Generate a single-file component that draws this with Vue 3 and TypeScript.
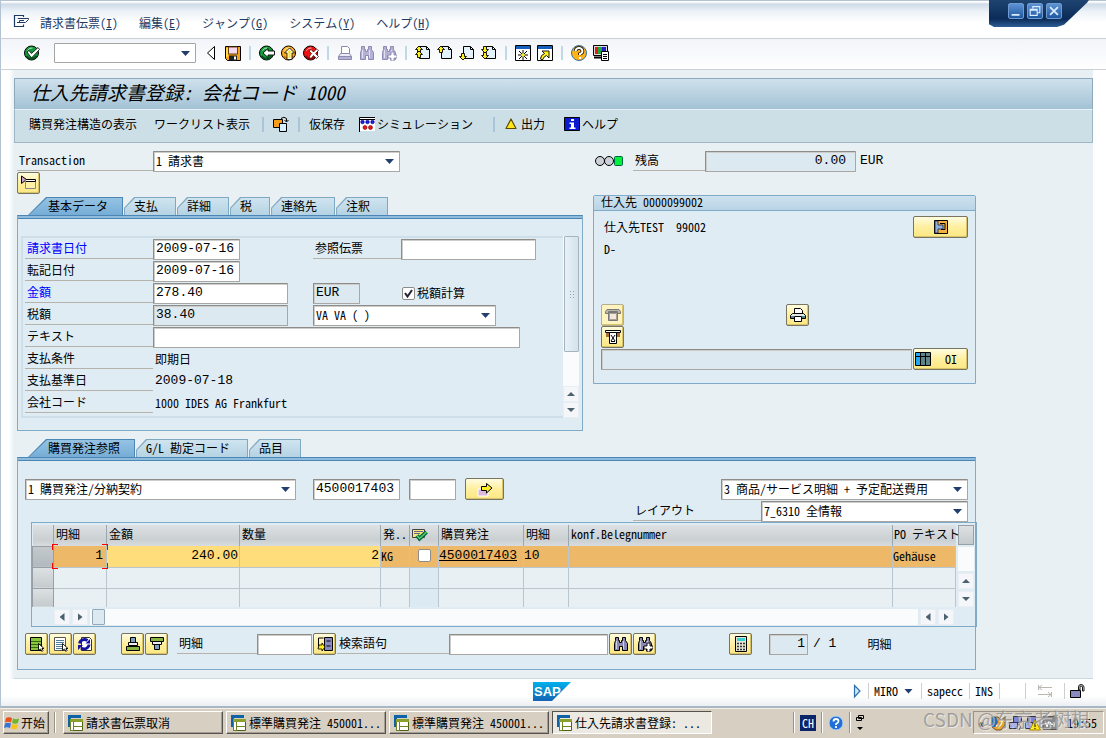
<script setup lang="ts">
import { h, reactive } from 'vue'

const page =
  '<path d="M4.500 1.500h7l3 3v9h-10z" fill="#e4f3fb" stroke="#000"/><path d="M11.500 1.500v3h3" fill="none" stroke="#000"/>'
const up = (x: number, y: number) =>
  `<path d="M${x} ${y}l3.500 3.500h-2v3h-3v-3h-2z" fill="#ffee20" stroke="#000" stroke-width=".9"/>`
const down = (x: number, y: number) =>
  `<path d="M${x} ${y}l3.500-3.500h-2v-3h-3v3h-2z" fill="#ffee20" stroke="#000" stroke-width=".9"/>`
const glasses = (line: string, fill: string) =>
  `<path d="M2.500 1.500h3v3h1v2h2v-2h1v-3h3v3l2 3v7h-5v-4h-3v4h-5v-7l1-3z" fill="${fill}" stroke="${line}"/><path d="M3.500 5v8M10.500 5v8" stroke="#fff" opacity=".6"/>`
const plus = (line: string) =>
  `<path d="M10 7h3v3h3v3h-3v3h-3v-3h-3v-3h3z" fill="#fff" stroke="${line}" stroke-width=".9"/>`
const ball = (fill: string, shade: string) =>
  `<circle cx="7.500" cy="8" r="7" fill="${fill}" stroke="#000"/><path d="M2.500 11a6 6 0 0 0 10 0" stroke="${shade}" stroke-width="2" fill="none"/><path d="M3.500 5.500q2-3 5-2.500" stroke="#fff" opacity=".7" fill="none"/>`

const icons: Record<string, string> = {
  menu: '<path d="M10.500 4v-1.500h-9v11h9v-2" fill="none" stroke="#1e3b63" stroke-width="1.200"/><path d="M5 6V5.500h10.500v1l-3 3h-6V7.500H11M4 9.500h4" fill="none" stroke="#1e3b63"/>',
  ok: ball('#129a3a', '#06521f') + '<path d="M3 7l2-1.500 2.500 3L14 2.500l1.500 2-8 8.500z" fill="#fff" stroke="#000" stroke-width=".8"/>',
  prev: '<path d="M11.500 1.500v13L4.500 8z" fill="#fff" stroke="#000"/>',
  save: '<path d="M.5 1.500h15v14h-13l-2-2z" fill="#f6a414" stroke="#000"/><path d="M3.500 2h9v7h-9z" fill="#f3d9ee" stroke="#6b3c10"/><path d="M4 10.500h8v5H4z" fill="#222"/><path d="M9 11.500h2v3H9z" fill="#fff"/><path d="M2 3v9" stroke="#ffee55" stroke-width="1.500"/>',
  back: ball('#129a3a', '#06521f') + '<path d="M4 8l5-4.500V6h6.500v4H9v2.500z" fill="#fff" stroke="#000" stroke-width=".9"/>',
  exit: ball('#ffb01c', '#c87200') + '<path d="M8.500 3l5 5H11v6.500H6V8H3.500z" fill="#fff" stroke="#000" stroke-width=".8"/><path d="M8.500 5l2.500 2.500H9.500V13h-2V7.500H6z" fill="#ffe21c"/>',
  cancel: ball('#ee1313', '#8c0606') + '<path d="M6 6l2.500 2.500L6 12l2 1.500 2.500-3 3 3 2-2-3-3 3-3-2-1.500-3 3L8 4.500z" fill="#fff" stroke="#400" stroke-width=".7"/>',
  print: '<path d="M4.500 9V1.500h6l2 2V9" fill="#fff" stroke="#8d89b0"/><path d="M3.500 8.500h9l2 3h-13z" fill="#eceaf5" stroke="#8d89b0"/><path d="M1.500 11.500h13v3h-13z" fill="#b4b1d4" stroke="#8d89b0"/>',
  find: glasses('#8d89b0', '#b4b1d4'),
  findNext: glasses('#8d89b0', '#b4b1d4') + plus('#8d89b0'),
  first: page + up(4, 1) + up(4, 6),
  pageUp: page + up(4, 1),
  pageDown: page + down(4, 15),
  last: page + down(4, 8) + down(4, 14),
  session: '<path d="M.5.500h15v15H.5z" fill="#fff" stroke="#000"/><path d="M1 1h14v3H1z" fill="#1560bd"/><path d="M8 5v10M3 10h10M4 6l8 8M12 6l-8 8" stroke="#000"/><circle cx="8" cy="10" r="1.800" fill="#ffee20"/>',
  shortcut: '<path d="M.5.500h15v15H.5z" fill="#fff" stroke="#000"/><path d="M1 1h14v3H1z" fill="#1560bd"/><path d="M5 6h7v7l-2.500-2.500q-3 1-4 4.500l-2-1q0-4 4-5.500z" fill="#ffee20" stroke="#000" stroke-width=".9"/>',
  help: '<circle cx="8" cy="8" r="7.500" fill="#ffb31a" stroke="#3b6ea0"/><path d="M4.500 6q.5-3 3.500-3t3.500 3q0 2-2.500 3v1" fill="none" stroke="#000" stroke-width="3.500"/><path d="M4.500 6q.5-3 3.500-3t3.500 3q0 2-2.500 3v1M9 12v2" fill="none" stroke="#fff" stroke-width="2"/>',
  layout: '<path d="M.5.500h14v10H.5z" fill="#ddd" stroke="#000"/><path d="M2 2h3v7H2z" fill="#e21b1b"/><path d="M5 2h4v7H5z" fill="#1ca83c"/><path d="M9 2h4v7H9z" fill="#2222cc"/><path d="M1 12.500h7" stroke="#000" stroke-width="2"/><path d="M8.500 6.500h7v9h-7z" fill="#fff" stroke="#000"/><path d="M10 9.500h4M10 11.500h4M10 13.500h4" stroke="#000"/>',
  other: '<path d="M.5 3.500h9v8h-9z" fill="#f59c1a" stroke="#000"/><path d="M6.500 7.500h7v8h-7z" fill="#d6efff" stroke="#000"/><path d="M8 2.500q3-2.500 5.500 0v3M11.500 4l2 2 2-2" fill="none" stroke="#000"/>',
  simulate: '<path d="M1 1h15v14H1z" fill="#fff"/><path d="M.5 16V1.500H16M1 3.500h15" fill="none" stroke="#000"/><g fill="#1b1be0" stroke="#000080" stroke-width=".6"><circle cx="3.500" cy="6" r="1.800"/><circle cx="8.500" cy="6" r="1.800"/><circle cx="13.500" cy="6" r="1.800"/></g><g fill="#ee1313" stroke="#700" stroke-width=".6"><circle cx="6" cy="11.500" r="2"/><circle cx="11.500" cy="11.500" r="2"/></g>',
  warn: '<path d="M8 3l5 9.500H3z" fill="#ffe61a" stroke="#5c4a00" stroke-width="1.200" stroke-linejoin="round"/>',
  info: '<path d="M.5 1.500h15v13H.5z" fill="#0b1bd0" stroke="#000"/><path d="M7 3h3v2H7zM5.500 6.500H10V11.500h1.500v1.500H5.500v-1.500H7V8H5.500z" fill="#fff"/>',
  header: '<path d="M.5 1l5 3.500-5 4z" fill="#c9a6d0" stroke="#000"/><path d="M4.500 5.500h10v8h-10z" fill="#fff0a8" stroke="#888"/><path d="M5 4.500h9.500v2H5" fill="#fff" stroke="#000"/>',
  vendor: '<path d="M1.500 1.500h13v13h-13z" fill="#f5b13c" stroke="#000"/><path d="M2 2h3v4h5v4H5v4H2z" fill="#8fb1e0" stroke="#223" stroke-width=".8"/><path d="M7 4.500h5v6H8" fill="none" stroke="#000"/>',
  phone: '<path d="M2 2.500h12l1.500 2v2h-3v-2h-9v2h-3v-2z" fill="#bdb9a6" stroke="#777"/><path d="M3.500 5.500h9v8h-9z" fill="#a7a390" stroke="#777"/><path d="M5 7h6v5H5z" fill="#f5e6de"/>',
  letter: '<path d="M1 4h3v4H1zM12 4h3v4h-3z" fill="#a86c36"/><path d="M.5 1.500h15v2H.5z" fill="#fff" stroke="#000"/><path d="M4.500 3.500h7v11h-7z" fill="#fff" stroke="#000"/><path d="M6 6l4 6M10 6l-4 6M6 12.500h4" stroke="#000"/>',
  printer: '<path d="M4.500 7V1.500h6l2 2V7" fill="#fff" stroke="#000"/><path d="M2.500 6.500h11l2 2v3h-15v-3z" fill="#dfe8ea" stroke="#000"/><path d="M4.500 9.500h7v5h-7z" fill="#fff" stroke="#000"/><path d="M1 9h3v2H1zM12 9h3v2h-3z" fill="#588"/>',
  grid: '<path d="M.5 1.500h15v13H.5z" fill="#5d8588" stroke="#000"/><path d="M1 2h4v12H1z" fill="#20a8f5"/><path d="M5.500 2v12M10.500 2v12M1 5.500h14" stroke="#000"/>',
  go: '<path d="M1 8h10v7H1z" fill="#dcb8da" stroke="#fff"/><path d="M4.500 5.500h5v-3L15 7l-5.500 5V9.500h-5z" fill="#ffee20" stroke="#000"/>',
  approve: '<path d="M.5 3.500h12v8H.5z" fill="#fbe67b" stroke="#444"/><path d="M2 5.500h9M2 7.500h6" stroke="#668"/><path d="M5 9.500l2.500 3L14.500 6" fill="none" stroke="#064" stroke-width="4"/><path d="M5 9.500l2.500 3L14.500 6" fill="none" stroke="#58d060" stroke-width="1.500"/>',
  selectAll: '<path d="M1.500 1.500h11v13h-11z" fill="#8bc53f" stroke="#000"/><path d="M2 5.500h10M2 8.500h10M2 11.500h10" stroke="#2d6a10"/><path d="M9.500 7.500v7l2-1.500 1.500 2.500 1-1-1-2h2z" fill="#fff" stroke="#000" stroke-width=".9"/>',
  deselect: '<path d="M1.500 1.500h11v13h-11z" fill="#fff" stroke="#555"/><path d="M3 4.500h8M3 6.500h8M3 8.500h8M3 10.500h6M3 12.500h6" stroke="#4d7d9d"/><path d="M9.500 7.500v7l2-1.500 1.500 2.500 1-1-1-2h2z" fill="#fff" stroke="#000" stroke-width=".9"/>',
  refresh: '<path d="M4.500 1.500h8l2 2v11h-10z" fill="#fff" stroke="#333"/><path d="M2.500 7.500a5 4.500 0 0 1 8-3M12 8.500a5 4.500 0 0 1-8 3.500" fill="none" stroke="#1414a0" stroke-width="2.800"/><path d="M8.500 7.500H13V3zM6 9H1v5z" fill="#1414a0"/>',
  insertRow: '<path d="M5.500 1.500h5v5h-5z" fill="#7ba0c4" stroke="#000"/><path d="M3.500 6.500h9v3h-9z" fill="#eee" stroke="#000"/><path d="M1.500 10.500h13v4h-13z" fill="#8bb53f" stroke="#000"/>',
  deleteRow: '<path d="M1.500 1.500h13v4h-13z" fill="#8bb53f" stroke="#000"/><path d="M3.500 5.500h9v3h-9z" fill="#eee" stroke="#000"/><path d="M5.500 8.500h5v5h-5z" fill="#7ba0c4" stroke="#000"/>',
  position: '<path d="M7.500 1.500h8v13h-8z" fill="#8a8ac0" stroke="#000"/><path d="M9.500 5h4M9.500 10h4M6.500 2h-5v11" stroke="#000" fill="none"/><path d="M2 9l3 0 0-2 3 4-3 4V13H1z" fill="#ffee20" stroke="#000" stroke-width=".8"/>',
  search: glasses('#000', '#8a8ab4'),
  searchNext: glasses('#000', '#8a8ab4') + plus('#000'),
  calc: '<path d="M2.500.500h11v15h-11z" fill="#e8e4d4" stroke="#000"/><path d="M4 2h8v3H4z" fill="#39d0d0"/><path d="M4 7.500h8M4 10.500h8M4 13.500h8" stroke="#333" stroke-width="1.500" stroke-dasharray="2 1"/>',
  swap: '<path d="M2 4.500h13M5 2L2 4.500 5 7M1 11.500h13M11 9l3 2.500-3 2.500M1.500 2v5M14.500 9v5" fill="none" stroke="#bbb6ae"/>',
  lock: '<path d="M.5 7.500h10v7H.5z" fill="#8a8ac0" stroke="#000"/><path d="M8.500 7V4q0-2.500 2.500-2.500T14 4v4h-1.500V4q0-1-1.500-1t-1 1v3z" fill="#fff" stroke="#000" stroke-width=".9"/>',
  play: '<path d="M5.500 2.500L11 8l-5.500 6z" fill="#cfe6f5" stroke="#2a6fae" stroke-width="1.200"/>',
  sap: '<path d="M1 0h13v3H4v9H1z" fill="#0d62a8"/><path d="M3.500 4.500h12v11h-12z" fill="#fff" stroke="#4f6212"/><path d="M3 4h13v3H3z" fill="#8aa02c"/><path d="M3.500 7v8.500h3V7M6.500 11.500h9" fill="none" stroke="#6d8420"/>',
  win: '<path d="M2 3q3-1.500 6 0l-1 4.500q-3-1.500-6 0z" fill="#e8501c"/><path d="M9 3.500q3 1.500 6 0L14 8q-3 1.500-6 0z" fill="#6cb52d"/><path d="M1 8.500q3-1.500 6 0L6 13q-3-1.500-6 0z" fill="#3a74d8"/><path d="M8 9q3 1.500 6 0l-1 4.500q-3 1.500-6 0z" fill="#f7c21a"/>',
  helpBlue: '<circle cx="8" cy="8" r="7" fill="#1f6fd6" stroke="#b9d4f4"/><path d="M5.500 6.500q0-2.500 2.500-2.500t2.500 2.200Q10.500 7.500 8 9v1M8 11v2" fill="none" stroke="#fff" stroke-width="1.800"/>',
  restore: '<path d="M6.500.500h5v3h-5zM4.500 2.500h5v3h-5z" fill="#d6cfc3" stroke="#000"/><path d="M5 12h6l-3 3z" fill="#000"/>',
  swirl: '<path d="M1 2h6l3 3 4-3v8l-4 5H5l-4-3z" fill="#f0a01c" stroke="#6b5a30"/><path d="M1 2h4l2 5-3 5H1z" fill="#2368b8"/><path d="M5 11q6 0 6-7" stroke="#fff3a0" stroke-width="2" fill="none"/>',
  net: '<path d="M5.500 1.500h8v6h-8z" fill="#7b84d8" stroke="#334"/><path d="M1.500 7.500h8v6h-8z" fill="#aab2f0" stroke="#334"/><path d="M11 9q3 3 0 6" stroke="#556" fill="none"/>',
  netWarn: '<path d="M2.500 1.500h8v6h-8z" fill="#7b84d8" stroke="#334"/><path d="M.5 7.500h7v6h-7z" fill="#aab2f0" stroke="#334"/><path d="M10 5l5.500 10h-11z" fill="#ffe61a" stroke="#a80"/><path d="M10 8v4M10 13v1" stroke="#000"/>',
  vm: '<path d="M1 1.500h14v13H1z" fill="#888" stroke="#555"/><path d="M3 6l2 6 2-6M8 12V7l2 3 2-3v5" fill="none" stroke="#fff"/>',
}

const Icon = (props: { name: string }) =>
  h('svg', { class: 'icon', viewBox: '0 0 16 16', width: 16, height: 16, 'aria-hidden': 'true', innerHTML: icons[props.name] })
Icon.props = ['name']

const menus = [
  { text: '請求書伝票', key: 'I' },
  { text: '編集', key: 'E' },
  { text: 'ジャンプ', key: 'G' },
  { text: 'システム', key: 'Y' },
  { text: 'ヘルプ', key: 'H' },
]
const toolGroups = [
  ['back', 'exit', 'cancel'],
  ['print', 'find', 'findNext'],
  ['first', 'pageUp', 'pageDown', 'last'],
  ['session', 'shortcut'],
  ['help', 'layout'],
]
const headerTabs = ['基本データ', '支払', '詳細', '税', '連絡先', '注釈']
const itemTabs = ['購買発注参照', 'G/L 勘定コード', '品目']
const tasks = ['請求書伝票取消', '標準購買発注 450001...', '標準購買発注 450001...', '仕入先請求書登録: ...']
const tray = ['swirl', 'net', 'netWarn', 'vm']

const form = reactive({
  command: '',
  balance: '0.00',
  invoiceDate: '2009-07-16',
  postingDate: '2009-07-16',
  reference: '',
  amount: '278.40',
  currency: 'EUR',
  calcTax: true,
  taxAmount: '38.40',
  text: '',
  account: '',
  poNumber: '4500017403',
  poItem: '',
  finalInvoice: false,
  position: '',
  searchTerm: '',
  current: '1',
})
</script>

<template>
  <div class="window">
    <div class="winctl">
      <button type="button" aria-label="最小化"><svg viewBox="0 0 16 16"><path d="M3 12.500h9" stroke="#dcecff" stroke-width="2" /></svg></button>
      <button type="button" aria-label="元に戻す"><svg viewBox="0 0 16 16"><path d="M5.500 5V3h8v7h-3M2.500 6h8v7h-8zM2.500 7h8" fill="none" stroke="#dcecff" stroke-width="1.300" /></svg></button>
      <button type="button" aria-label="閉じる"><svg viewBox="0 0 16 16"><path d="M3.500 3.500l9 9M12.500 3.500l-9 9" stroke="#dcecff" stroke-width="2" /></svg></button>
    </div>

    <nav class="menubar">
      <Icon name="menu" />
      <button v-for="m in menus" :key="m.key" type="button">{{ m.text }}(<u>{{ m.key }}</u>)</button>
    </nav>

    <div class="toolbar">
      <button type="button" class="tool" aria-label="確定"><Icon name="ok" /></button>
      <input v-model="form.command" class="command arrow" aria-label="コマンド" />
      <button type="button" class="tool" aria-label="前"><Icon name="prev" /></button>
      <button type="button" class="tool" aria-label="保存"><Icon name="save" /></button>
      <div v-for="(g, i) in toolGroups" :key="i" class="toolgroup">
        <button v-for="n in g" :key="n" type="button" class="tool" :aria-label="n"><Icon :name="n" /></button>
      </div>
    </div>

    <main class="screen">
      <h1>仕入先請求書登録: 会社コード 1000</h1>
      <div class="appbar">
        <button type="button" class="structure">購買発注構造の表示</button>
        <button type="button">ワークリスト表示</button>
        <i class="sep near"></i>
        <button type="button" aria-label="他の伝票"><Icon name="other" /></button>
        <i class="sep"></i>
        <button type="button">仮保存</button>
        <button type="button"><Icon name="simulate" />シミュレーション</button>
        <i class="sep wide"></i>
        <button type="button"><Icon name="warn" />出力</button>
        <button type="button" class="helpbtn"><Icon name="info" />ヘルプ</button>
      </div>

      <div class="body">
        <div class="upper">
          <section class="left">
            <div class="row">
              <label for="transaction" class="lbl w-trans">Transaction</label>
              <select id="transaction" class="field arrow w-trans-sel"><option>1 請求書</option></select>
            </div>
            <div class="row">
              <button type="button" class="btn" aria-label="ヘッダ"><Icon name="header" /></button>
            </div>
            <div class="tabs">
              <button v-for="(t, i) in headerTabs" :key="t" type="button" class="tab" :class="{ active: i === 0 }"><span>{{ t }}</span></button>
            </div>
            <div class="panel basic">
              <div class="formgrid">
                <label for="bldat" class="lbl req">請求書日付</label>
                <input id="bldat" v-model="form.invoiceDate" class="field w-date" />
                <label for="xblnr" class="lbl">参照伝票</label>
                <input id="xblnr" v-model="form.reference" class="field w-amount" />

                <label for="budat" class="lbl first">転記日付</label>
                <input id="budat" v-model="form.postingDate" class="field w-date" />

                <label for="wrbtr" class="lbl req first">金額</label>
                <input id="wrbtr" v-model="form.amount" class="field w-amount" />
                <input v-model="form.currency" class="field ro w-cur" readonly aria-label="通貨" />
                <label class="check"><input v-model="form.calcTax" type="checkbox" />税額計算</label>

                <label for="wmwst" class="lbl first">税額</label>
                <input id="wmwst" v-model="form.taxAmount" class="field ro w-amount" readonly />
                <select class="field arrow w-tax" aria-label="税コード"><option>VA VA ( )</option></select>

                <label for="sgtxt" class="lbl first">テキスト</label>
                <input id="sgtxt" v-model="form.text" class="field w-text" />

                <span class="lbl first">支払条件</span>
                <output class="val">即期日</output>
                <span class="lbl first">支払基準日</span>
                <output class="val num">2009-07-18</output>
                <span class="lbl first">会社コード</span>
                <output class="val">1000 IDES AG Frankfurt</output>
              </div>
              <div class="vscroll">
                <div class="thumb"><i></i></div>
                <button type="button" class="sb up" aria-label="上へ"></button>
                <button type="button" class="sb down" aria-label="下へ"></button>
              </div>
            </div>
          </section>

          <section class="right">
            <div class="row balance">
              <svg class="lights" viewBox="0 0 28 12"><circle cx="5" cy="6" r="4.500" fill="#ccd0d8" stroke="#000" /><circle cx="14" cy="6" r="4.500" fill="#ccd0d8" stroke="#000" /><rect x="19.500" y="1.500" width="8" height="9" rx="1" fill="#00f03c" stroke="#064" /></svg>
              <label for="balance" class="lbl w-bal">残高</label>
              <input id="balance" v-model="form.balance" class="field ro w-balance" readonly />
              <span class="num cur">EUR</span>
            </div>
            <div class="group">
              <h2>仕入先 0000099002</h2>
              <div class="vendor">
                <div class="row"><span class="txt">仕入先TEST&nbsp; 99002</span><button type="button" class="btn big" aria-label="仕入先"><Icon name="vendor" /></button></div>
                <div class="row"><span class="txt">D-</span></div>
                <div class="row actions">
                  <button type="button" class="btn" disabled aria-label="電話"><Icon name="phone" /></button>
                  <button type="button" class="btn" aria-label="印刷"><Icon name="printer" /></button>
                </div>
                <div class="row"><button type="button" class="btn" aria-label="書類"><Icon name="letter" /></button></div>
                <div class="row">
                  <input v-model="form.account" class="field ro grow" readonly aria-label="口座" />
                  <button type="button" class="btn big oi"><Icon name="grid" />OI</button>
                </div>
              </div>
            </div>
          </section>
        </div>

        <section class="lower">
          <div class="tabs">
            <button v-for="(t, i) in itemTabs" :key="t" type="button" class="tab" :class="{ active: i === 0 }"><span>{{ t }}</span></button>
          </div>
          <div class="panel items">
            <div class="row inset">
              <select class="field arrow w-ref" aria-label="参照区分"><option>1 購買発注/分納契約</option></select>
              <input v-model="form.poNumber" class="field w-date po" aria-label="購買発注番号" />
              <input v-model="form.poItem" class="field w-item" aria-label="購買発注明細" />
              <button type="button" class="btn go" aria-label="実行"><Icon name="go" /></button>
              <select class="field arrow w-kind push" aria-label="明細区分"><option>3 商品/サービス明細 + 予定配送費用</option></select>
            </div>
            <div class="row inset">
              <label for="layout" class="lbl push w-layout">レイアウト</label>
              <select id="layout" class="field arrow w-layout-sel"><option>7_6310 全情報</option></select>
            </div>

            <div class="tablebox">
              <div class="tablerow">
                <table>
                  <colgroup>
                    <col class="c0" /><col class="c1" /><col class="c2" /><col class="c3" /><col class="c4" />
                    <col class="c4" /><col class="c6" /><col class="c7" /><col /><col class="c9" />
                  </colgroup>
                  <thead>
                    <tr>
                      <th></th><th>明細</th><th>金額</th><th>数量</th><th>発..</th>
                      <th><Icon name="approve" /></th><th>購買発注</th><th>明細</th><th>konf.Belegnummer</th><th>PO テキスト</th>
                    </tr>
                  </thead>
                  <tbody>
                    <tr class="sel">
                      <td class="handle"></td>
                      <td class="num r cursor">1</td>
                      <td class="num r edit">240.00</td>
                      <td class="num r edit">2</td>
                      <td>KG</td>
                      <td class="c"><input v-model="form.finalInvoice" type="checkbox" aria-label="最終請求" /></td>
                      <td class="num"><a href="#">4500017403</a></td>
                      <td class="num">10</td>
                      <td></td>
                      <td>Gehäuse</td>
                    </tr>
                    <tr v-for="r in 2" :key="r"><td class="handle"></td><td v-for="c in 9" :key="c" :class="{ tint: c === 5 }"></td></tr>
                  </tbody>
                </table>
                <div class="tscroll">
                  <button type="button" class="config" aria-label="テーブル設定"></button>
                  <i class="track"></i>
                  <button type="button" class="sb up" aria-label="上へ"></button>
                  <button type="button" class="sb down" aria-label="下へ"></button>
                </div>
              </div>
              <div class="hscroll">
                <button type="button" class="sb lt" aria-label="左へ"></button>
                <button type="button" class="sb rt" aria-label="右へ"></button>
                <div class="track"><i></i></div>
                <button type="button" class="sb lt" aria-label="左へ"></button>
                <button type="button" class="sb rt" aria-label="右へ"></button>
              </div>
            </div>

            <div class="row inset itembar">
              <div class="btns">
                <button type="button" class="btn" aria-label="全選択"><Icon name="selectAll" /></button>
                <button type="button" class="btn" aria-label="全選択解除"><Icon name="deselect" /></button>
                <button type="button" class="btn" aria-label="更新"><Icon name="refresh" /></button>
              </div>
              <div class="btns rows">
                <button type="button" class="btn" aria-label="行挿入"><Icon name="insertRow" /></button>
                <button type="button" class="btn" aria-label="行削除"><Icon name="deleteRow" /></button>
              </div>
              <label for="pos" class="lbl w-pos">明細</label>
              <input id="pos" v-model="form.position" class="field w-posin" />
              <button type="button" class="btn" aria-label="位置付け"><Icon name="position" /></button>
              <label for="term" class="lbl w-term">検索語句</label>
              <input id="term" v-model="form.searchTerm" class="field w-termin" />
              <div class="btns">
                <button type="button" class="btn" aria-label="検索"><Icon name="search" /></button>
                <button type="button" class="btn" aria-label="次を検索"><Icon name="searchNext" /></button>
              </div>
              <button type="button" class="btn calc" aria-label="計算"><Icon name="calc" /></button>
              <input v-model="form.current" class="field ro w-page" readonly aria-label="現在明細" />
              <span class="num total">/ 1</span>
              <span class="unit">明細</span>
            </div>
          </div>
        </section>
      </div>
    </main>

    <footer class="status">
      <svg class="logo" viewBox="0 0 38 19" role="img" aria-label="SAP">
        <defs><linearGradient id="sapfill" x1="0" y1="0" x2="0" y2="1"><stop offset="0" stop-color="#00b1eb" /><stop offset="1" stop-color="#1464b4" /></linearGradient></defs>
        <path d="M0 0h38L19 19H0z" fill="url(#sapfill)" />
        <text x="1" y="14" fill="#fff" font-family="Liberation Sans, sans-serif" font-weight="bold" font-size="13">SAP</text>
      </svg>
      <div class="info">
        <Icon name="play" />
        <span class="cell">MIRO <i class="caret"></i></span>
        <span class="cell">sapecc</span>
        <span class="cell">INS</span>
        <span class="cell blank"></span>
        <span class="cell swap"><Icon name="swap" /></span>
        <span class="cell last"><Icon name="lock" /></span>
      </div>
    </footer>

    <div class="taskbar">
      <button type="button" class="start"><Icon name="win" />开始</button>
      <i class="grip"></i>
      <div class="tasks">
        <button v-for="(t, i) in tasks" :key="i" type="button" class="task" :class="{ pressed: i === 3 }"><Icon name="sap" /><span>{{ t }}</span></button>
      </div>
      <div class="lang">
        <i class="grip"></i>
        <b>CH</b>
        <i class="grip"></i>
        <Icon name="helpBlue" />
        <i class="grip"></i>
        <Icon name="restore" />
      </div>
      <div class="tray">
        <span>«</span>
        <Icon v-for="n in tray" :key="n" :name="n" />
        <time>19:55</time>
      </div>
      <div class="watermark">CSDN @东京老树根</div>
    </div>
  </div>
</template>

<style>
body {
  margin: 0;
}
</style>

<style scoped>
.window,
.window * {
  box-sizing: border-box;
}
.window {
  position: relative;
  display: flex;
  flex-direction: column;
  min-height: 100vh;
  background: #fff;
  color: #000;
  font: 12px/16px 'Noto Sans Mono CJK JP', 'Noto Sans CJK JP', 'Liberation Mono', monospace;
}
button,
input,
select {
  font: inherit;
  color: inherit;
  margin: 0;
}
button {
  border: 0;
  padding: 0;
  background: none;
  white-space: nowrap;
}
.icon {
  display: block;
  flex: none;
}
.num {
  font: 13px/16px 'Liberation Mono', monospace;
}

.winctl {
  position: absolute;
  top: 0;
  right: 17px;
  width: 100px;
  height: 27px;
  display: flex;
  gap: 3px;
  padding: 3px 0 0 19px;
  background: linear-gradient(#1f4470, #0b2b58 70%, #2e5d96);
  clip-path: polygon(0 0, 100% 0, 98% 10%, 75% 92%, 68% 100%, 5% 100%, 0 90%);
}
.winctl button {
  width: 16px;
  height: 16px;
  border: 1px solid #6f9bd0;
  border-radius: 2px;
  background: linear-gradient(#5e93d3, #1f57a0);
}
.winctl svg {
  display: block;
}

.menubar {
  display: flex;
  align-items: center;
  gap: 21px;
  height: 39px;
  padding: 6px 0 0 12px;
  border-top: 1px solid #b4c3d1;
  border-left: 1px solid #b4c3d1;
  border-bottom: 1px solid #ccd0d6;
  background: linear-gradient(#fff 1px, #cfdbe8 3px, #eef3f8 11px, #fff 22px);
  color: #1e3b63;
}
.menubar .icon {
  margin: -4px -10px 0 0;
}
.toolbar {
  display: flex;
  align-items: center;
  height: 31px;
  padding: 0 0 2px 20px;
  border-left: 1px solid #b4c3d1;
  border-bottom: 1px solid #ccd0d6;
  background: linear-gradient(#f2f4f9, #fff);
}
.tool {
  display: grid;
  place-items: center;
  width: 22px;
  height: 22px;
}
.command {
  width: 142px;
  height: 20px;
  margin: 0 4px 0 11px;
  border: 1px solid #a5a5a5;
  border-radius: 1px;
  outline: 0;
}
.toolgroup {
  display: flex;
}
.toolgroup::before {
  content: '';
  width: 2px;
  margin: 4px 5px;
  background: #c1d8e6;
}

.screen {
  flex: 1;
  margin: 0 13px 0 0;
  padding: 8px 0 0 13px;
  border-left: 1px solid #b4c3d1;
  background: linear-gradient(90deg, #fff 8px, #e9f0f3 13px) no-repeat, #fff;
}
h1 {
  margin: 0;
  height: 31px;
  padding-left: 16px;
  border: 1px solid #8fa9bc;
  border-bottom: 0;
  background: linear-gradient(#cfe1ec, #a3c2d5);
  font-size: 19px;
  line-height: 25px;
  font-weight: 500;
  font-style: italic;
}
.appbar {
  display: flex;
  align-items: center;
  gap: 14px;
  height: 34px;
  padding: 0 0 4px 14px;
  border: 1px solid #9fb6c4;
  border-top-color: #e6f1f7;
  background: #cddfe6;
}
.appbar button {
  display: flex;
  align-items: center;
  gap: 2px;
}
.appbar .structure {
  margin-right: 3px;
}
.appbar .helpbtn {
  margin-left: 5px;
}
.sep {
  width: 2px;
  height: 15px;
  margin: 0 -5px;
  background: #a9c5d8;
}
.sep.near {
  margin: 0 -5px 0 -2px;
}
.sep.wide {
  margin: 0 -6px 0 6px;
}
.body {
  padding: 7px 0 8px 3px;
  border-bottom: 1px solid #ccd8df;
  background: #e9f0f3;
}
.upper {
  display: grid;
  grid-template-columns: 566fr 383fr;
  gap: 10px;
  max-width: 959px;
}
.row {
  display: flex;
  height: 22px;
}

.field {
  flex: none;
  height: 21px;
  margin-top: 1px;
  padding: 0 2px 2px;
  border: 1px solid #a9a7a3;
  border-top-color: #8e8c88;
  border-left-color: #8e8c88;
  border-radius: 1px;
  background-color: #fff;
  box-shadow: inset 1px 1px #cfcdc9;
  outline: 0;
}
input.field {
  font: 13px/16px 'Liberation Mono', monospace;
  min-width: 0;
}
select.field {
  appearance: none;
  padding: 0 20px 3px 2px;
  line-height: 15px;
}
.field.ro {
  background-color: #dce9f1;
}
.arrow {
  background-image: url("data:image/svg+xml,%3Csvg xmlns='http://www.w3.org/2000/svg' width='9' height='5'%3E%3Cpath d='M0 0h9L4.500 5z' fill='%23203f6e'/%3E%3C/svg%3E");
  background-repeat: no-repeat;
  background-position: right 5px top 7px;
}
.lbl {
  flex: none;
  height: 21px;
  padding: 2px 0 0 2px;
  border-bottom: 1px solid #b5b3ac;
  white-space: nowrap;
}
.req {
  color: #00f;
}
.btn {
  flex: none;
  display: flex;
  align-items: center;
  justify-content: center;
  width: 23px;
  height: 22px;
  border: 1px solid #77745f;
  border-radius: 2px;
  background: linear-gradient(#fffce0, #ffef9e 50%, #fae784);
  box-shadow: inset -1px -1px #d9c36a;
}
.btn:disabled {
  border-color: #b3ae93;
  background: #fff3c0;
}
.btn.big {
  width: 55px;
}
.w-trans {
  width: 136px;
}
.w-trans-sel {
  width: 247px;
}
.w-date {
  width: 87px;
}
.w-amount {
  width: 135px;
}
.w-cur {
  width: 47px;
}
.w-tax {
  width: 183px;
  grid-column: 3 / 5;
}
.w-text {
  width: 367px;
  grid-column: 2 / 5;
}

.tabs {
  display: flex;
  gap: 1px;
  height: 21px;
  padding: 3px 0 0 11px;
}
.tab {
  position: relative;
  height: 18px;
  padding: 0 18px 1px 10px;
  background: #7fa9c2;
  clip-path: polygon(0 60%, 10px 0, 100% 0, 100% 100%, 0 100%);
}
.tab::before {
  content: '';
  position: absolute;
  inset: 1px 1px 0;
  background: linear-gradient(#cfe4ef, #b5d3e4);
  clip-path: polygon(0 60%, 10px 0, 100% 0, 100% 100%, 0 100%);
}
.tab span {
  position: relative;
}
.tab.active {
  padding: 0 15px 1px 20px;
  background: #4b86b4;
  clip-path: polygon(0 100%, 18px 0, 100% 0, 100% 100%);
}
.tab.active::before {
  background: linear-gradient(#95c3e4, #76add6);
  clip-path: polygon(0 100%, 18px 0, 100% 0, 100% 100%);
}
.panel {
  border: 1px solid #7fabc8;
  border-top: 1px solid #4b86b4;
  background: #dfecf4;
  box-shadow: inset 0 2px #8fbcdc, inset 0 3px #4b86b4;
}
.basic {
  display: flex;
  align-items: stretch;
  padding: 20px 3px 12px;
}
.formgrid {
  flex: 1;
  display: grid;
  grid-template-columns: 128px 160px 88px 1fr;
  grid-auto-rows: 22px;
  padding: 0 0 2px 2px;
  border: 2px solid #cfdfe9;
  border-width: 2px 0 2px 2px;
}
.first {
  grid-column: 1;
}
.val {
  grid-column: 2 / 5;
  padding: 3px 0 0 2px;
}
.check {
  display: flex;
  align-items: center;
  gap: 2px;
  padding-left: 1px;
  white-space: nowrap;
}
input[type='checkbox'] {
  appearance: none;
  width: 13px;
  height: 13px;
  border: 1px solid #8e8c88;
  border-radius: 2px;
  background: #fff;
}
input[type='checkbox']:checked {
  background: #fff url("data:image/svg+xml,%3Csvg xmlns='http://www.w3.org/2000/svg' width='11' height='11'%3E%3Cpath d='M2 5l2.500 3.500L9 2' fill='none' stroke='%23223' stroke-width='2'/%3E%3C/svg%3E");
}
.vscroll {
  display: flex;
  flex-direction: column;
  width: 16px;
  background: #fafbfc;
}
.thumb {
  flex: none;
  display: grid;
  place-items: center;
  width: 15px;
  height: 116px;
  margin: 0 0 auto 1px;
  border: 1px solid #a5b4bf;
  border-radius: 1px;
  background: linear-gradient(90deg, #e9f1f7, #d4e2ec);
}
.thumb i {
  width: 6px;
  height: 9px;
  background: radial-gradient(#8ea6b8 1px, transparent 1px) 0 0 / 3px 3px;
}
.sb {
  flex: none;
  display: grid;
  place-items: center;
  width: 16px;
  height: 16px;
  border: 1px solid #e8eef3;
  background: #f4f6f9;
}
.sb::before {
  content: '';
  width: 8px;
  height: 4px;
  background: #4a626e;
}
.up::before {
  clip-path: polygon(50% 0, 100% 100%, 0 100%);
}
.down::before {
  clip-path: polygon(0 0, 100% 0, 50% 100%);
}
.lt::before,
.rt::before {
  width: 5px;
  height: 8px;
}
.lt::before {
  clip-path: polygon(100% 0, 100% 100%, 0 50%);
}
.rt::before {
  clip-path: polygon(0 0, 100% 50%, 0 100%);
}

.balance {
  align-items: flex-start;
  padding-left: 2px;
}
.lights {
  width: 28px;
  height: 12px;
  margin: 5px 10px 0 0;
}
.w-bal {
  width: 72px;
}
.w-balance {
  width: 151px;
  padding-right: 9px;
  text-align: right;
}
.cur {
  padding: 3px 0 0 4px;
}
.group {
  margin-top: 23px;
  border: 1px solid #7fabc8;
  border-radius: 2px 2px 0 0;
  background: #dfecf4;
}
h2 {
  margin: 0;
  height: 15px;
  padding-left: 7px;
  border-bottom: 1px solid #7fabc8;
  background: linear-gradient(#cde1ee, #bad4e5);
  font-size: 12px;
  font-weight: 400;
  line-height: 12px;
}
.vendor {
  padding: 5px 7px 13px;
}
.vendor .row {
  gap: 1px;
}
.vendor .txt {
  flex: 1;
  padding: 3px 0 0 3px;
}
.actions {
  justify-content: space-between;
  width: 208px;
  margin-top: 44px;
}
.grow {
  flex: 1;
}
.oi {
  justify-content: flex-start;
  gap: 14px;
  padding-left: 1px;
}

.lower {
  max-width: 959px;
  padding-top: 5px;
}
.items {
  padding: 20px 0 14px;
}
.inset {
  padding: 0 7px;
}
.push {
  margin-left: auto;
}
.w-ref {
  width: 271px;
}
.po {
  margin-left: 17px;
}
.w-item {
  width: 47px;
  margin-left: 9px;
}
.go {
  width: 39px;
  margin-left: 9px;
}
.w-kind {
  width: 247px;
}
.w-layout {
  width: 128px;
}
.w-layout-sel {
  width: 207px;
}
.tablebox {
  margin: 0 -2px 0 13px;
  padding: 2px 2px 1px 0;
  border: 1px solid #7fabc8;
}
.tablerow {
  display: flex;
}
table {
  flex: 1;
  width: 0;
  border-collapse: collapse;
  table-layout: fixed;
}
.c0 {
  width: 21px;
}
.c1 {
  width: 53px;
}
.c2 {
  width: 133px;
}
.c3 {
  width: 141px;
}
.c4 {
  width: 29px;
}
.c6 {
  width: 85px;
}
.c7 {
  width: 45px;
}
.c9 {
  width: 63px;
}
th,
td {
  height: 21px;
  padding: 0;
  overflow: hidden;
  white-space: nowrap;
  text-align: left;
  font-weight: 400;
}
th {
  padding: 0 0 3px 2px;
  border-right: 1px solid #9ba7af;
  background: linear-gradient(#dde1e3, #cacfd2 70%, #d8dcde);
}
th:last-child {
  padding-left: 1px;
  overflow: visible;
  border-right: 0;
}
td {
  border-right: 1px solid #bac6cd;
  border-bottom: 1px solid #bac6cd;
  background: #e8f0f4;
}
tbody tr:last-child td {
  border-bottom: 0;
  height: 19px;
}
.sel td {
  padding-bottom: 1px;
  background: #edb969;
}
.sel .edit {
  background: #ffdd7b;
}
.handle,
.sel .handle {
  border: 1px solid #96a0a6;
  background: linear-gradient(#dde1e3, #c4cacd);
}
.sel .handle {
  background: linear-gradient(#c3c9cc, #b3babd);
}
.tint {
  background: #dceaf4;
}
.r {
  text-align: right;
}
.sel .r {
  padding-right: 1px;
}
.c input {
  display: block;
  margin: 0 auto;
}
.sel .cursor {
  position: relative;
  overflow: visible;
  padding-right: 3px;
}
.cursor::after {
  content: '';
  position: absolute;
  inset: -2px;
  --r: linear-gradient(#f00, #f00) no-repeat;
  background: var(--r) 0 0 / 6px 1px, var(--r) 0 0 / 1px 6px, var(--r) 100% 0 / 6px 1px, var(--r) 100% 0 / 1px 6px,
    var(--r) 0 100% / 6px 1px, var(--r) 0 100% / 1px 6px, var(--r) 100% 100% / 6px 1px, var(--r) 100% 100% / 1px 6px;
}
td a {
  color: inherit;
}
.tscroll {
  display: flex;
  flex-direction: column;
  align-items: stretch;
  gap: 2px;
  width: 18px;
  padding-left: 2px;
}
.tscroll .track {
  flex: 1;
  background: #fafbfc;
}
.config {
  height: 20px;
  border: 1px solid #96a0a6;
  background: linear-gradient(#dde1e3, #c4cacd);
}
.hscroll {
  display: flex;
  gap: 2px;
  height: 16px;
  margin: 2px 20px 0 22px;
}
.hscroll .track {
  flex: 1;
  padding-left: 2px;
  background: #fafbfc;
}
.hscroll .track i {
  display: block;
  width: 13px;
  height: 16px;
  border: 1px solid #94a9b8;
  border-radius: 1px;
  background: #dde9f1;
}

.itembar {
  margin-top: 6px;
}
.btns {
  display: flex;
  gap: 1px;
}
.rows {
  margin: 0 9px 0 25px;
}
.w-pos {
  width: 80px;
}
.w-posin {
  width: 55px;
  margin-right: 1px;
}
.w-term {
  width: 112px;
  margin-left: 1px;
}
.w-termin {
  width: 159px;
  margin-right: 1px;
}
.calc {
  margin: 0 17px 0 73px;
}
.w-page {
  width: 39px;
  text-align: right;
}
.total {
  padding: 3px 0 0 5px;
}
.unit {
  padding: 3px 0 0 31px;
}

.status {
  display: flex;
  align-items: center;
  justify-content: space-between;
  height: 29px;
  padding: 0 20px 3px 532px;
  border-left: 1px solid #b4c3d1;
  border-bottom: 2px solid #a8b7c3;
  background: linear-gradient(#fff 60%, #eceff3);
}
.logo {
  width: 38px;
  height: 19px;
}
.info {
  display: flex;
  align-items: center;
}
.info > .icon {
  margin-right: 3px;
}
.cell {
  display: flex;
  align-items: center;
  gap: 6px;
  height: 16px;
  padding: 0 6px 0 5px;
  border-left: 1px solid #cfcfcf;
}
.cell.blank {
  width: 26px;
}
.cell.swap {
  padding: 0 11px;
}
.cell.last {
  padding-right: 0;
}
.caret {
  width: 9px;
  height: 5px;
  margin-right: 2px;
  background: #203f6e;
  clip-path: polygon(0 0, 100% 0, 50% 100%);
}

.taskbar {
  position: relative;
  display: flex;
  align-items: center;
  height: 30px;
  padding: 0 2px 2px 3px;
  border-top: 1px solid #f4f0e8;
  background: #d8cfc3;
}
.start,
.task {
  display: flex;
  align-items: center;
  gap: 3px;
  height: 23px;
  border: 1px solid;
  border-color: #fff #56534e #56534e #fff;
  box-shadow: inset -1px -1px #a39d93;
}
.start {
  width: 46px;
  font-family: 'Noto Sans CJK SC', sans-serif;
}
.start .icon {
  margin-right: -2px;
}
.grip {
  width: 2px;
  height: 21px;
  margin: 0 5px;
  border-left: 1px solid #999288;
  border-right: 1px solid #fff;
}
.tasks {
  flex: 0 1 649px;
  display: flex;
  gap: 3px;
  margin-left: 2px;
}
.task {
  flex: 1 1 0;
  min-width: 0;
  padding-left: 3px;
  overflow: hidden;
}
.pressed {
  border-color: #56534e #fff #fff #56534e;
  background: #ece8e2;
  box-shadow: none;
}
.lang {
  display: flex;
  align-items: center;
  margin-left: 76px;
}
.lang b {
  width: 16px;
  padding: 0 2px;
  background: #0a246a;
  color: #fff;
  font-weight: 400;
}
.lang > .icon:last-child {
  margin-left: -4px;
}
.tray {
  display: flex;
  align-items: center;
  gap: 1px;
  height: 23px;
  margin-left: auto;
  padding: 0 6px 0 4px;
  border: 1px solid;
  border-color: #999288 #fff #fff #999288;
}
.tray span {
  margin-right: 6px;
}
.tray time {
  margin-left: 8px;
}
.watermark {
  position: absolute;
  right: 16px;
  top: 0;
  color: rgba(140, 140, 140, 0.75);
  font: 19px/20px 'Noto Sans CJK SC', sans-serif;
  text-shadow: 1px 1px rgba(255, 255, 255, 0.5);
  pointer-events: none;
}
</style>
